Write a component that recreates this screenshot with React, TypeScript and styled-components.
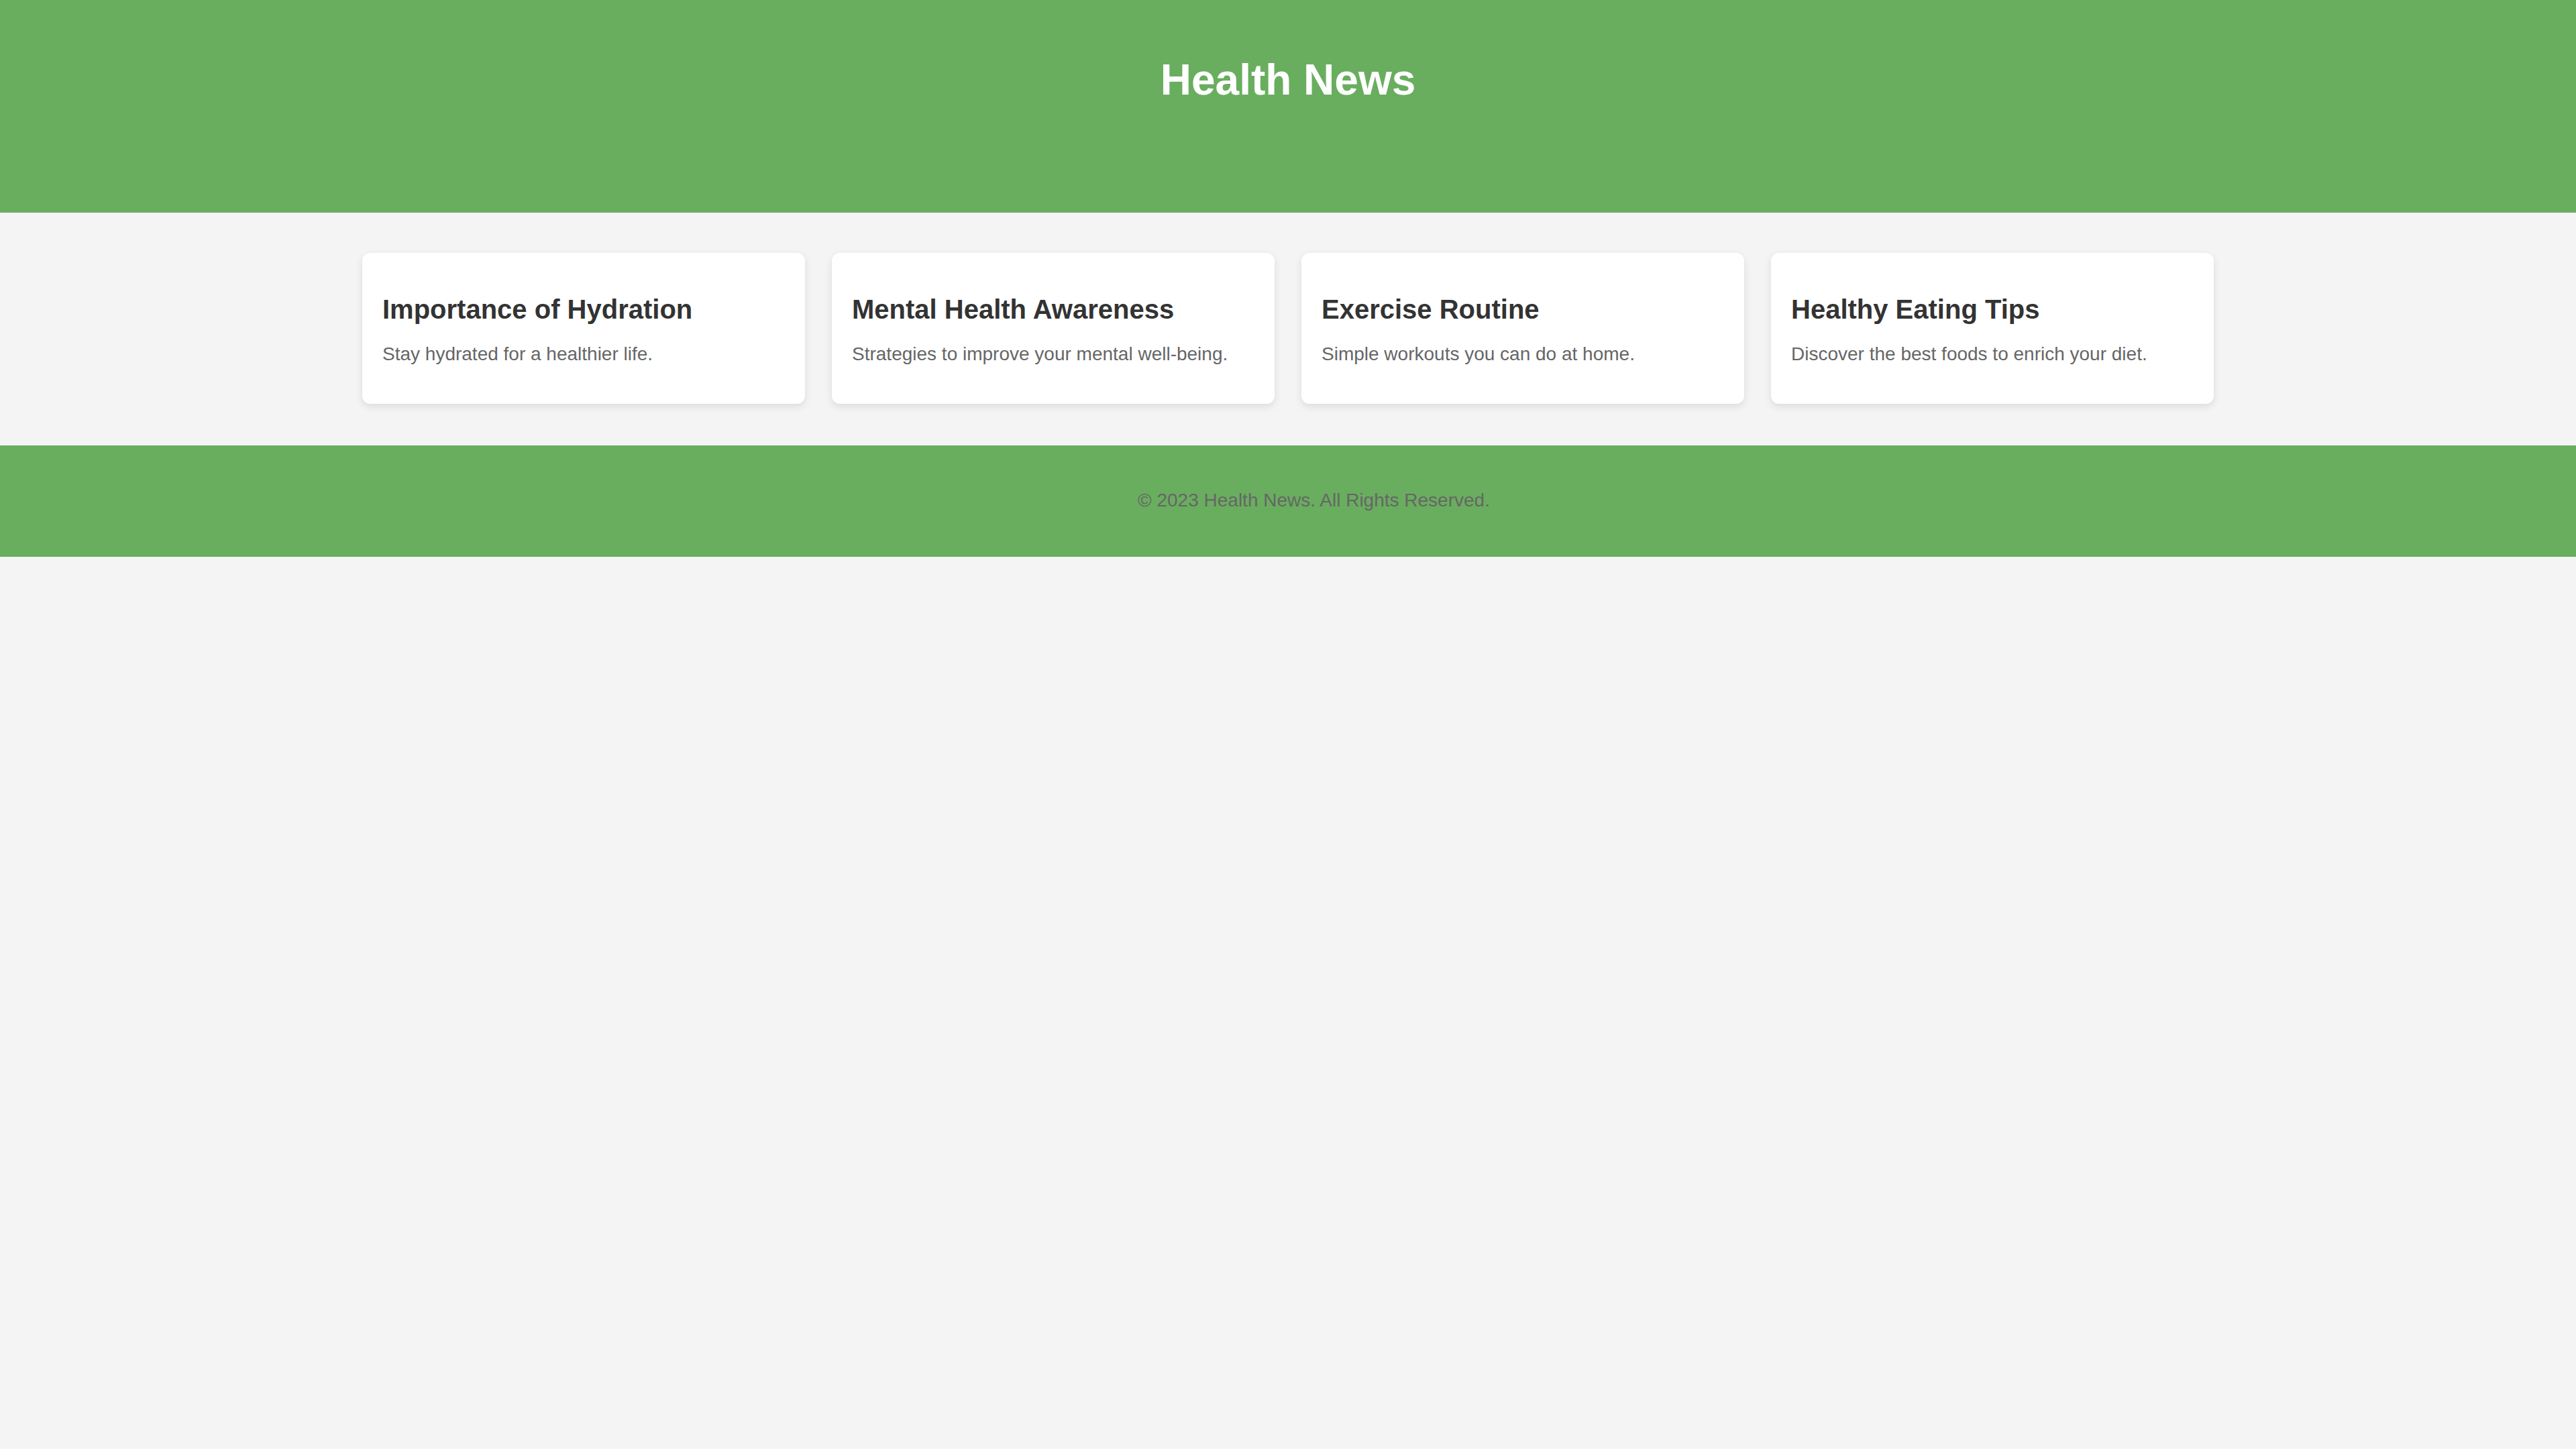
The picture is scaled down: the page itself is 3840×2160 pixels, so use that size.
import React from "react";
import styled, { createGlobalStyle } from "styled-components";

const GlobalStyle = createGlobalStyle`
  html, body {
    margin: 0;
    padding: 0;
    background: #f4f4f4;
    font-family: "Liberation Sans", Arial, sans-serif;
  }
  * { box-sizing: border-box; }
`;

const Header = styled.header`
  background: #69ae5e;
  height: 317px;
  padding: 82px 40px 0;
  text-align: center;
`;

const Title = styled.h1`
  margin: 0;
  font-size: 64px;
  font-weight: 700;
  color: #ffffff;
  line-height: normal;
`;

const Main = styled.main`
  padding: 60px 40px 62px;
`;

const CardGrid = styled.section`
  width: 2760px;
  margin: 0 auto;
  display: grid;
  grid-template-columns: repeat(4, 1fr);
  gap: 40px;
`;

const Card = styled.article`
  background: #ffffff;
  border-radius: 12px;
  box-shadow: 0 4px 12px rgba(0, 0, 0, 0.1);
  padding: 62px 30px 57px;
  height: 225px;
`;

const CardTitle = styled.h3`
  margin: 0 0 28px;
  font-size: 40px;
  font-weight: 700;
  color: #333333;
  line-height: normal;
`;

const CardText = styled.p`
  margin: 0;
  font-size: 28px;
  color: #666666;
  line-height: normal;
`;

const Footer = styled.footer`
  background: #69ae5e;
  height: 166px;
  padding: 66px 0 0 77px;
  text-align: center;
`;

const FooterText = styled.p`
  margin: 0;
  font-size: 28px;
  color: #666666;
  line-height: normal;
`;

const articles = [
  { title: "Importance of Hydration", text: "Stay hydrated for a healthier life." },
  { title: "Mental Health Awareness", text: "Strategies to improve your mental well-being." },
  { title: "Exercise Routine", text: "Simple workouts you can do at home." },
  { title: "Healthy Eating Tips", text: "Discover the best foods to enrich your diet." },
];

export default function App() {
  return (
    <>
      <GlobalStyle />
      <Header>
        <Title>Health News</Title>
      </Header>
      <Main>
        <CardGrid>
          {articles.map((a) => (
            <Card key={a.title}>
              <CardTitle>{a.title}</CardTitle>
              <CardText>{a.text}</CardText>
            </Card>
          ))}
        </CardGrid>
      </Main>
      <Footer>
        <FooterText>© 2023 Health News. All Rights Reserved.</FooterText>
      </Footer>
    </>
  );
}
